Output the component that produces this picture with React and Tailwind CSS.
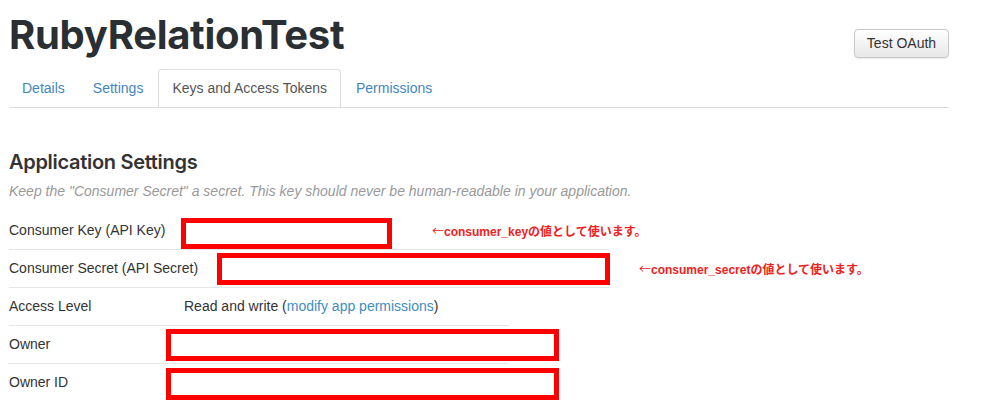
import React from "react";

const Row = ({ label, children, line = "w-[600px]", last = false, box, note }) => (
  <div className="relative h-[38px]">
    <div className={`flex h-[37px] items-center ${line} ${last ? "" : "border-b border-[#e6e6e6]"} box-content`}>
      <div className="w-[175px] shrink-0 whitespace-nowrap">{label}</div>
      <div className="whitespace-nowrap">{children}</div>
    </div>
    {box}
    {note}
  </div>
);

const RedBox = ({ className }) => (
  <div className={`absolute border-[5px] border-[#ff0000] ${className}`} />
);

const Note = ({ className, children }) => (
  <div
    className={`absolute text-[12px] font-bold text-[#ee2222] whitespace-nowrap ${className}`}
    style={{ fontFamily: '"Liberation Sans","Noto Sans CJK JP",sans-serif' }}
  >
    <span style={{ fontFamily: '"Noto Sans CJK JP",sans-serif' }} className="font-normal">←</span>
    {children}
  </div>
);

export default function App() {
  return (
    <div
      className="w-[989px] h-[401px] overflow-hidden bg-white text-[14px] text-[#333]"
      style={{ fontFamily: '"Liberation Sans", Arial, sans-serif' }}
    >
      <div className="w-[940px] ml-[9px]">
        {/* header */}
        <div className="flex items-start justify-between pt-[15px]">
          <h1
            className="text-[40px] leading-[40px] font-bold tracking-[-0.3px] text-[#292f33]"
            style={{ fontFamily: "Inter, sans-serif" }}
          >
            RubyRelationTest
          </h1>
          <button className="mt-[14px] h-[29px] w-[95px] rounded-[4px] border border-[#c8c8c8] bg-gradient-to-b from-white to-[#e8e8e8] text-[14px] text-[#333] shadow-[0_1px_1px_rgba(0,0,0,0.08)]">
            Test OAuth
          </button>
        </div>

        {/* tabs */}
        <div className="mt-[11px] flex h-[38px] border-b border-[#dddddd] box-content">
          <div className="mr-[2px] flex items-center px-[13px] text-[#3f87c0]">Details</div>
          <div className="mr-[2px] flex items-center px-[13px] text-[#3f87c0]">Settings</div>
          <div className="mr-[2px] -mb-px flex items-center rounded-t-[4px] border border-b-0 border-[#dddddd] bg-white px-[13px] h-[38px] text-[#555]">
            Keys and Access Tokens
          </div>
          <div className="flex items-center px-[13px] text-[#3f87c0]">Permissions</div>
        </div>

        {/* section */}
        <h2
          className="mt-[41px] text-[20px] leading-[26px] font-semibold text-[#333] tracking-[-0.3px]"
          style={{ fontFamily: "Inter, sans-serif" }}
        >
          Application Settings
        </h2>
        <p className="mt-[6px] italic text-[#999] text-[14px] leading-[20px]">
          Keep the "Consumer Secret" a secret. This key should never be human-readable in your application.
        </p>

        <div className="mt-[11px]">
          <Row
            label="Consumer Key (API Key)"
            box={<RedBox className="left-[172px] top-[6px] w-[211px] h-[31px]" />}
            note={<Note className="left-[423px] top-[10px]">consumer_keyの値として使います。</Note>}
          />
          <Row
            label="Consumer Secret (API Secret)"
            box={<RedBox className="left-[208px] top-[3px] w-[393px] h-[32px]" />}
            note={<Note className="left-[630px] top-[10px]">consumer_secretの値として使います。</Note>}
          />
          <Row label="Access Level" line="w-[500px]">
            <span>
              Read and write (<span className="text-[#3f8dc4]">modify app permissions</span>)
            </span>
          </Row>
          <Row
            label="Owner"
            line="w-[500px]"
            box={<RedBox className="left-[157px] top-[3px] w-[393px] h-[32px]" />}
          />
          <Row
            label="Owner ID"
            line="w-[500px]"
            last
            box={<RedBox className="left-[157px] top-[4px] w-[393px] h-[32px]" />}
          />
        </div>
      </div>
    </div>
  );
}
